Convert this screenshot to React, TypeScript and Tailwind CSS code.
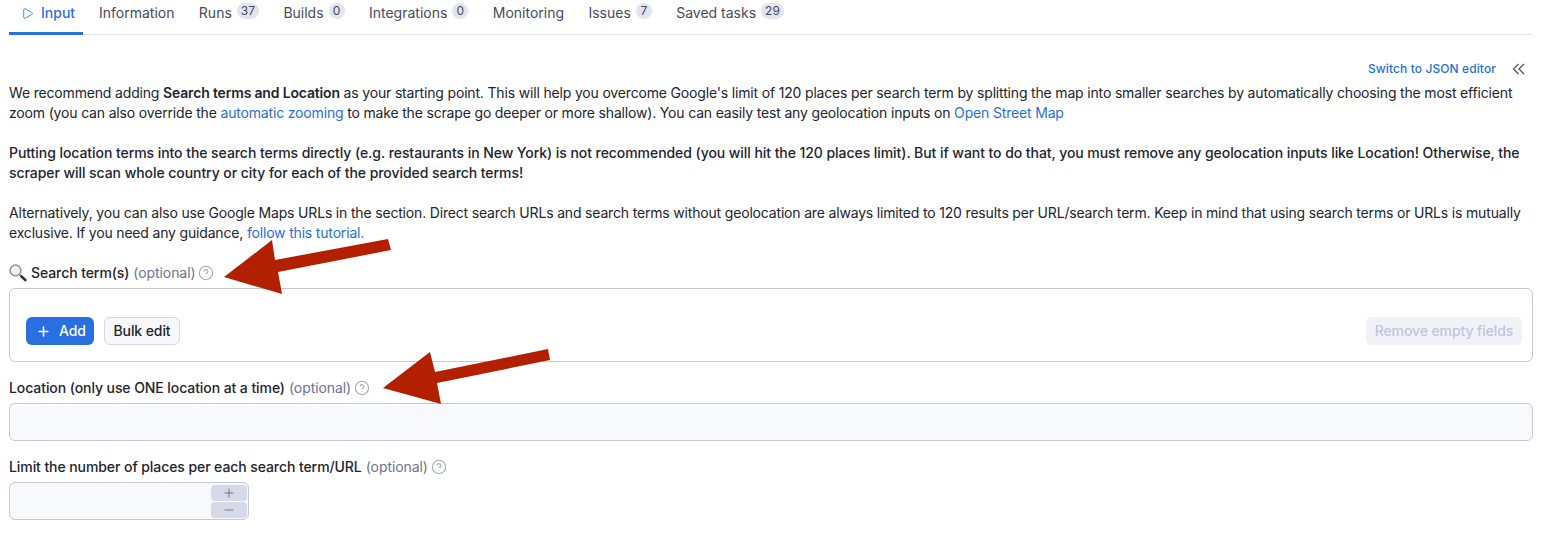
import React from 'react';
import { CircleHelp, Minus, Play, Plus } from 'lucide-react';

const tabs = [
  { label: 'Information' },
  { label: 'Runs', count: '37' },
  { label: 'Builds', count: '0' },
  { label: 'Integrations', count: '0' },
  { label: 'Monitoring' },
  { label: 'Issues', count: '7' },
  { label: 'Saved tasks', count: '29' },
];

const Optional: React.FC = () => (
  <>
    <span className="ml-1 font-normal text-[#6e7391]">(optional)</span>
    <CircleHelp size={16} strokeWidth={1.6} className="ml-[3px] text-[#a4a7b8]" />
  </>
);

const Link: React.FC<{ children: React.ReactNode }> = ({ children }) => (
  <a href="#" className="text-[#1f6fdc]">
    {children}
  </a>
);

const Arrow: React.FC<{ points: string; left: string; top: string; w: number; h: number }> = ({ points, left, top, w, h }) => (
  <svg
    className={`absolute ${left} ${top}`}
    width={w}
    height={h}
    viewBox={`0 0 ${w} ${h}`}
  >
    <polygon points={points} fill="#b32000" />
  </svg>
);

// the magnifier emoji of the reference: pale glass, grey rim, dark handle
const Magnifier: React.FC = () => (
  <svg width="18" height="18" viewBox="0 0 18 18" className="mr-1 shrink-0">
    <line x1="10.5" y1="10.5" x2="12.5" y2="12.5" stroke="#9a9a9a" strokeWidth="2" />
    <line x1="12.5" y1="12.5" x2="16.3" y2="16" stroke="#33343a" strokeWidth="2.6" strokeLinecap="round" />
    <circle cx="6.5" cy="6.5" r="5.4" fill="#eef1f4" stroke="#8f9296" strokeWidth="1.5" />
    <path d="M3.5 5.5a3.4 3.4 0 0 1 3-2.6" fill="none" stroke="#ffffff" strokeWidth="1.2" />
  </svg>
);

export default function App() {
  return (
    <div className="relative h-[534px] w-[1545px] overflow-hidden bg-white pl-[9px] pr-3 font-['Inter',sans-serif] text-sm leading-5 text-[#22242e]">
      <nav className="flex h-[35px] border-b border-[#e3e5ef]">
        <div className="-mb-px flex h-[35px] w-[74px] items-start gap-[7px] border-b-[3px] border-[#2a6fe0] pl-[12px] pt-[3px] font-medium text-[#2a6fe0]">
          <Play size={13} strokeWidth={1.5} className="mt-1" />
          <span>Input</span>
        </div>
        <div className="flex gap-[24.4px] pl-4 pt-[3px] text-[#474b60]">
          {tabs.map((t) => (
            <div key={t.label} className="flex items-start gap-[5px]">
              <span>{t.label}</span>
              {t.count && (
                <span className="flex h-[16px] min-w-[16px] items-center justify-center rounded-full bg-[#e2e4f1] px-[4px] text-xs leading-4 text-[#44485c]">
                  {t.count}
                </span>
              )}
            </div>
          ))}
        </div>
      </nav>

      <div className="flex h-[48px] items-start justify-end pt-[26px]">
        <a href="#" className="text-xs font-medium leading-4 tracking-[0.1px] text-[#1f6fdc]">
          Switch to JSON editor
        </a>
        <svg width="13" height="12" viewBox="0 0 13 12" fill="none" stroke="#50546a" strokeWidth="1.3" className="ml-[16px] mr-[8px] mt-[2px]">
          <path d="M6.5 1 1.5 6l5 5M12 1 7 6l5 5" />
        </svg>
      </div>

      <p className="tracking-[-0.17px]">
        We recommend adding <b className="font-semibold">Search terms and Location</b> as your starting point. This will help you overcome Google's limit of 120 places per search term by splitting the map into smaller searches by automatically choosing the most efficient zoom (you can also override the <Link>automatic zooming</Link> to make the scrape go deeper or more shallow). You can easily test any geolocation inputs on <Link>Open Street Map</Link>
      </p>
      <p className="mt-5 font-medium tracking-[-0.06px]">
        Putting location terms into the search terms directly (e.g. restaurants in New York) is not recommended (you will hit the 120 places limit). But if want to do that, you must remove any geolocation inputs like Location! Otherwise, the scraper will scan whole country or city for each of the provided search terms!
      </p>
      <p className="mt-5 tracking-[-0.175px]">
        Alternatively, you can also use Google Maps URLs in the section. Direct search URLs and search terms without geolocation are always limited to 120 results per URL/search term. Keep in mind that using search terms or URLs is mutually exclusive. If you need any guidance, <Link>follow this tutorial.</Link>
      </p>

      <div className="mt-[20px] flex h-5 items-center font-medium tracking-[-0.08px]">
        <Magnifier />
        Search term(s)
        <Optional />
      </div>
      <div className="mt-[5px] flex h-[74px] items-end justify-between rounded-md border border-[#c5c7da] pb-[16px] pl-4 pr-[10px]">
        <div className="flex gap-[10px] tracking-[-0.1px]">
          <button className="flex h-7 w-[68px] items-center gap-[8px] rounded-md bg-[#2a6fe0] pl-[10px] font-medium text-white">
            <Plus size={15} strokeWidth={2.5} />
            Add
          </button>
          <button className="h-7 w-[76px] rounded-md border border-[#d5d7e5] bg-[#f7f8fb] font-medium">
            Bulk edit
          </button>
        </div>
        <button className="h-7 w-[156px] rounded-md bg-[#f1f2f8] font-medium tracking-[-0.1px] text-[#c2c5da]">
          Remove empty fields
        </button>
      </div>

      <div className="mt-4 flex h-5 items-center font-medium tracking-[-0.08px]">
        Location (only use ONE location at a time)
        <Optional />
      </div>
      <div className="mt-[5px] h-[38px] rounded-md border border-[#c5c7da] bg-[#f8f9fc]" />

      <div className="mt-4 flex h-5 items-center font-medium tracking-[-0.08px]">
        Limit the number of places per each search term/URL
        <Optional />
      </div>
      <div className="mt-[5px] flex h-[38px] w-[240px] flex-col items-end justify-center gap-px rounded-md border border-[#c5c7da] bg-[#f8f9fc] pr-px">
        <span className="flex h-4 w-[36px] items-center justify-center rounded bg-[#d6d9ea] text-[#50546a]">
          <Plus size={14} strokeWidth={1.25} />
        </span>
        <span className="flex h-4 w-[36px] items-center justify-center rounded bg-[#d6d9ea] text-[#50546a]">
          <Minus size={14} strokeWidth={1.25} />
        </span>
      </div>

      <Arrow left="left-[220px]" top="top-[235px]" w={175} h={62} points="4,42 52,5 55,25 168,4 171,15 58,37 62,59" />
      <Arrow left="left-[380px]" top="top-[345px]" w={175} h={62} points="3,43 50,7 55,27 168,4 170,15 57,38 61,59" />
    </div>
  );
}
